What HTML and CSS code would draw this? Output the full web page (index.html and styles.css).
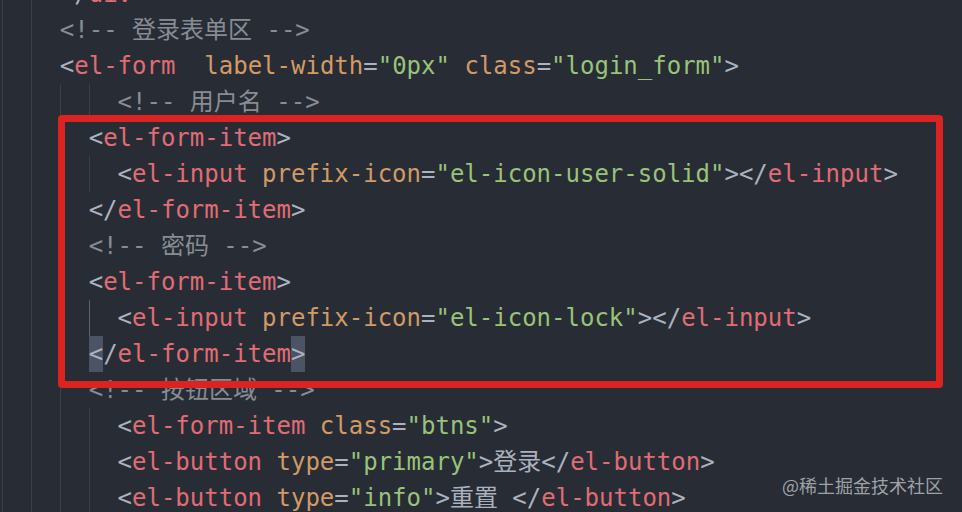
FILE: index.html
```html
<!DOCTYPE html>
<html lang="zh-CN">
<head>
    <meta charset="UTF-8">
    <meta name="viewport" content="width=device-width, initial-scale=1.0">
    <title>login form</title>
    <link rel="stylesheet" href="styles.css">
</head>
<body>
    <div class="editor">
        <div class="code">
            <div class="line"><span class="ind"></span><span class="ind"></span><span><span class="p">&lt;/</span><span class="t">div</span><span class="p">&gt;</span></span></div>
            <div class="line"><span class="ind"></span><span class="ind"></span><span class="c">&lt;!-- 登录表单区 --&gt;</span></div>
            <div class="line"><span class="ind"></span><span class="ind"></span><span><span class="p">&lt;</span><span class="t">el-form</span>  <span class="a">label-width</span><span class="p">=</span><span class="s">"0px"</span> <span class="a">class</span><span class="p">=</span><span class="s">"login_form"</span><span class="p">&gt;</span></span></div>
            <div class="line"><span class="ind"></span><span class="ind"></span><span class="ind"></span><span class="ind"></span><span class="c">&lt;!-- 用户名 --&gt;</span></div>
            <div class="line"><span class="ind"></span><span class="ind"></span><span class="ind"></span><span><span class="p">&lt;</span><span class="t">el-form-item</span><span class="p">&gt;</span></span></div>
            <div class="line"><span class="ind"></span><span class="ind"></span><span class="ind"></span><span class="ind"></span><span><span class="p">&lt;</span><span class="t">el-input</span> <span class="a">prefix-icon</span><span class="p">=</span><span class="s">"el-icon-user-solid"</span><span class="p">&gt;&lt;/</span><span class="t">el-input</span><span class="p">&gt;</span></span></div>
            <div class="line"><span class="ind"></span><span class="ind"></span><span class="ind"></span><span><span class="p">&lt;/</span><span class="t">el-form-item</span><span class="p">&gt;</span></span></div>
            <div class="line"><span class="ind"></span><span class="ind"></span><span class="ind"></span><span class="c">&lt;!-- 密码 --&gt;</span></div>
            <div class="line"><span class="ind"></span><span class="ind"></span><span class="ind"></span><span><span class="p">&lt;</span><span class="t">el-form-item</span><span class="p">&gt;</span></span></div>
            <div class="line"><span class="ind"></span><span class="ind"></span><span class="ind"></span><span class="ind active"></span><span><span class="p">&lt;</span><span class="t">el-input</span> <span class="a">prefix-icon</span><span class="p">=</span><span class="s">"el-icon-lock"</span><span class="p">&gt;&lt;/</span><span class="t">el-input</span><span class="p">&gt;</span></span></div>
            <div class="line"><span class="ind"></span><span class="ind"></span><span class="ind"></span><span><span class="p match">&lt;</span><span class="p">/</span><span class="t">el-form-item</span><span class="p match">&gt;</span></span></div>
            <div class="line"><span class="ind"></span><span class="ind"></span><span class="ind"></span><span class="c">&lt;!-- 按钮区域 --&gt;</span></div>
            <div class="line"><span class="ind"></span><span class="ind"></span><span class="ind"></span><span class="ind"></span><span><span class="p">&lt;</span><span class="t">el-form-item</span> <span class="a">class</span><span class="p">=</span><span class="s">"btns"</span><span class="p">&gt;</span></span></div>
            <div class="line"><span class="ind"></span><span class="ind"></span><span class="ind"></span><span class="ind"></span><span><span class="p">&lt;</span><span class="t">el-button</span> <span class="a">type</span><span class="p">=</span><span class="s">"primary"</span><span class="p">&gt;登录&lt;/</span><span class="t">el-button</span><span class="p">&gt;</span></span></div>
            <div class="line"><span class="ind"></span><span class="ind"></span><span class="ind"></span><span class="ind"></span><span><span class="p">&lt;</span><span class="t">el-button</span> <span class="a">type</span><span class="p">=</span><span class="s">"info"</span><span class="p">&gt;重置 &lt;/</span><span class="t">el-button</span><span class="p">&gt;</span></span></div>
        </div>
        <div class="mark-box"></div>
        <div class="watermark">@稀土掘金技术社区</div>
    </div>
</body>
</html>
```

FILE: styles.css
```css
html, body {
    margin: 0;
    height: 100%;
    background-color: #282c34;
    overflow: hidden;
}
.editor {
    position: relative;
    height: 512px;
    overflow: hidden;
}
.code {
    margin-top: -24px;
    padding-left: 2px;
    font-family: "DejaVu Sans Mono", "Noto Sans CJK SC", monospace;
    font-size: 24px;
    color: #abb2bf;
}
.line {
    display: flex;
    height: 36px;
    line-height: 36px;
    white-space: pre;
}
.ind {
    flex: none;
    width: 2ch;
    box-sizing: border-box;
    border-left: 1px solid #3a3f4a;
}
.ind.active {
    border-left-color: #5c6370;
}
.p {
    color: #abb2bf;
}
.t {
    color: #e06c75;
}
.a {
    color: #d19a66;
}
.s {
    color: #98c379;
}
.c {
    color: #878c95;
}
.match {
    display: inline-block;
    background-color: #4b5364;
}
.mark-box {
    position: absolute;
    left: 58px;
    top: 115px;
    width: 885px;
    height: 273px;
    box-sizing: border-box;
    border: 7px solid #dd2222;
    border-radius: 4px;
}
.watermark {
    position: absolute;
    right: 19px;
    top: 472px;
    font-family: "Noto Sans CJK SC", sans-serif;
    font-size: 18px;
    line-height: 26px;
    color: #9ea2a8;
}
```
